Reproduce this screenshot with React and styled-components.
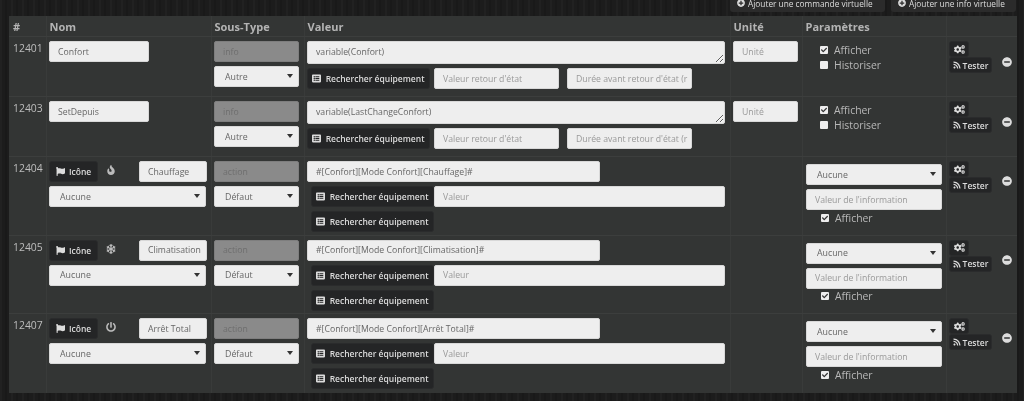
import React from "react";
import styled, { createGlobalStyle } from "styled-components";
import { FaFlag, FaFire, FaSnowflake, FaPowerOff, FaCogs, FaRss, FaMinusCircle, FaPlusCircle, FaListAlt, FaCheck } from "react-icons/fa";

const Global = createGlobalStyle`
  html, body { margin: 0; height: 401px; overflow: hidden; background: #1c1c1c; }
  body {
    font-family: "Open Sans", sans-serif; font-size: 10px; color: #bbb;
    background-image: repeating-linear-gradient(90deg, rgba(255,255,255,.025) 0 2px, transparent 2px 5px, rgba(0,0,0,.12) 5px 7px, transparent 7px 11px);
  }
  * { box-sizing: border-box; }
`;
const Page = styled.div`padding: 0 7px 0 9px; height: 401px; overflow: hidden; filter: blur(0.3px);`;
const Toolbar = styled.div`display: flex; justify-content: flex-end; align-items: flex-end; gap: 6px; height: 12px; margin-bottom: 4px; padding-right: 1px;`;
const TopButton = styled.button`
  flex: none; width: ${p => p.$w}px; height: 18px; padding: 0 0 0 7px; display: inline-flex; align-items: center; gap: 3px;
  background: #2b2b2b; border: 0; border-radius: 3px; color: #ddd; font: 450 8.3px "Open Sans", sans-serif; white-space: nowrap;
`;
const Panel = styled.div`background: #333534; height: 377px;`;
const Row = styled.div`
  display: grid; grid-template-columns: 37px 165px 93px 426px 72px 144px 71px;
  height: ${p => p.$h}px; border-bottom: 1px solid #3c3e3d;
  &:last-child { border-bottom: 0; }
`;
const Head = styled.div`padding: 2px 3px 0 2.5px; font-weight: 700; font-size: 11px; color: #b4b4b4; line-height: 17px; border-left: 1px solid #393b3a; &:first-child { padding-left: 4px; border-left: 0; }`;
const Cell = styled.div`padding: 4px 3px 0 2px; border-left: 1px solid #393b3a; min-width: 0; display: flex; flex-direction: column; gap: 4px; align-items: flex-start;`;
const IdCell = styled.div`padding: 4px 0 0 4px; font-size: 10.4px; line-height: 15px; color: #bdbdbd;`;
const Field = styled.input`
  display: block; width: ${p => p.$w ? p.$w + "px" : "100%"}; height: 21px; flex: none; padding: 0 3px 0 8px; margin: 0;
  background: ${p => p.$off ? "#8a8a8a" : "#eeeeee"}; border: 1px solid ${p => p.$off ? "#7e7e7e" : "#d8d8d8"}; border-radius: 2px;
  font: 8.7px "Open Sans", sans-serif; color: ${p => p.$off ? "#6e6e6e" : "#666"}; outline: 0;
  &::placeholder { color: #999; opacity: 1; }
`;
const Area = styled.textarea`
  display: block; width: 418px; height: 23px; flex: none; padding: 4px 8px; margin: 0; resize: vertical; overflow: hidden;
  background: #eeeeee; border: 1px solid #d8d8d8; border-radius: 2px; font: 8.7px/13px "Open Sans", sans-serif; color: #666; outline: 0;
`;
const SelectWrap = styled.div`
  position: relative; width: ${p => p.$w}px; height: 21px; flex: none;
  &::after { content: ""; position: absolute; right: 6px; top: 8px; border: 3px solid transparent; border-top: 4px solid #333; border-bottom: 0; }
`;
const Select = styled.select`
  appearance: none; width: 100%; height: 100%; padding: 0 0 0 ${p => p.$pad}px; margin: 0; display: block;
  background: #eeeeee; border: 1px solid #d8d8d8; border-radius: 2px; font: 8.8px "Open Sans", sans-serif; color: #666; outline: 0;
`;
const Dark = styled.button`
  flex: none; height: ${p => p.$h || 21}px; width: ${p => p.$w}px; padding: 0; margin: 0; display: inline-flex; align-items: center; justify-content: center; gap: 2px;
  background: #242526; border: 1px solid #2a2b2c; border-radius: 3px; color: #dcdcdc; font: 550 8.5px "Open Sans", sans-serif; white-space: nowrap;
  svg { flex: none; }
`;
const Line = styled.div`display: flex; align-items: flex-start; gap: ${p => p.$gap || 0}px; padding-left: ${p => p.$pl || 0}px; margin-left: ${p => p.$ml || 0}px;`;
const Glyph = styled.span`width: 41px; height: 21px; flex: none; display: flex; align-items: flex-start; padding: 4px 0 0 8px; color: #bbb;`;
const Checks = styled.div`padding: ${p => p.$pt ?? 2}px 0 0 15px; margin-top: ${p => p.$mt || 0}px; display: flex; flex-direction: column; gap: 2px;`;
const Check = styled.div`display: flex; align-items: center; gap: 6px; height: 13px; font-size: 10.4px; color: #b8b8b8;`;
const Box = styled.span`width: 8px; height: 8px; background: #eee; border-radius: 1px; display: flex; align-items: center; justify-content: center; color: #333; font-size: 6px;`;
const Actions = styled.div`position: relative; padding: 4px 0 0 2px; border-left: 1px solid #393b3a; display: flex; flex-direction: column; align-items: flex-start;`;
const Remove = styled.span`position: absolute; left: 55px; top: ${p => p.$top}px; color: #ddd; display: flex;`;
const ParamCell = styled(Cell)`padding-top: ${p => p.$pt}px; padding-left: 3px;`;

const Search = ({ w = 123 }) => <Dark $w={w}><FaListAlt size={9} />&nbsp;Rechercher équipement</Dark>;
const Act = ({ top }) => (
  <Actions>
    <Dark $w={20} $h={16}><FaCogs size={11} /></Dark>
    <Dark $w={43} $h={16}><FaRss size={8} /> Tester</Dark>
    <Remove $top={top}><FaMinusCircle size={10} /></Remove>
  </Actions>
);
const Info = ({ id, name, value }) => (
  <Row $h={60}>
    <IdCell>{id}</IdCell>
    <Cell><Field $w={100} defaultValue={name} /></Cell>
    <Cell><Field $w={85} $off defaultValue="info" readOnly /><SelectWrap $w={85}><Select $pad={10} defaultValue="Autre"><option>Autre</option></Select></SelectWrap></Cell>
    <Cell>
      <Area defaultValue={value} />
      <Line $gap={4}>
        <Search />
        <Field $w={125} placeholder="Valeur retour d'état" />
        <Line $ml={4}><Field $w={125} placeholder="Durée avant retour d'état (r" /></Line>
      </Line>
    </Cell>
    <Cell><Field $w={65} placeholder="Unité" /></Cell>
    <Cell><Checks>
      <Check><Box><FaCheck /></Box>Afficher</Check>
      <Check><Box />Historiser</Check>
    </Checks></Cell>
    <Act top={20} />
  </Row>
);
const Action = ({ id, icon, name, value, h }) => (
  <Row $h={h}>
    <IdCell>{id}</IdCell>
    <Cell>
      <Line><Dark $w={49}><FaFlag size={9} />&nbsp;Icône</Dark><Glyph>{icon}</Glyph><Field $w={68} defaultValue={name} /></Line>
      <SelectWrap $w={157}><Select $pad={10} defaultValue="Aucune"><option>Aucune</option></Select></SelectWrap>
    </Cell>
    <Cell><Field $w={85} $off defaultValue="action" readOnly /><SelectWrap $w={85}><Select $pad={10} defaultValue="Défaut"><option>Défaut</option></Select></SelectWrap></Cell>
    <Cell>
      <Field $w={293} defaultValue={value} />
      <Line $pl={4}><Search /><Field $w={291} placeholder="Valeur" /></Line>
      <Line $pl={4}><Search /></Line>
    </Cell>
    <Cell />
    <ParamCell $pt={7}>
      <SelectWrap $w={136}><Select $pad={10} defaultValue="Aucune"><option>Aucune</option></Select></SelectWrap>
      <Field $w={136} placeholder="Valeur de l'information" />
      <Checks $pt={0} $mt={-3}><Check><Box><FaCheck /></Box>Afficher</Check></Checks>
    </ParamCell>
    <Act top={19} />
  </Row>
);

export default function App() {
  return (
    <Page>
      <Global />
      <Toolbar>
        <TopButton $w={155}><FaPlusCircle size={8} /> Ajouter une commande virtuelle</TopButton>
        <TopButton $w={125}><FaPlusCircle size={8} /> Ajouter une info virtuelle</TopButton>
      </Toolbar>
      <Panel>
        <Row $h={21}>
          <Head>#</Head><Head>Nom</Head><Head>Sous-Type</Head><Head>Valeur</Head><Head>Unité</Head><Head>Paramètres</Head><Head />
        </Row>
        <Info id="12401" name="Confort" value="variable(Confort)" />
        <Info id="12403" name="SetDepuis" value="variable(LastChangeConfort)" />
        <Action id="12404" h={78.5} icon={<FaFire size={10} />} name="Chauffage" value="#[Confort][Mode Confort][Chauffage]#" />
        <Action id="12405" h={78.5} icon={<FaSnowflake size={10} />} name="Climatisation" value="#[Confort][Mode Confort][Climatisation]#" />
        <Action id="12407" h={79} icon={<FaPowerOff size={10} />} name="Arrêt Total" value="#[Confort][Mode Confort][Arrêt Total]#" />
      </Panel>
    </Page>
  );
}
